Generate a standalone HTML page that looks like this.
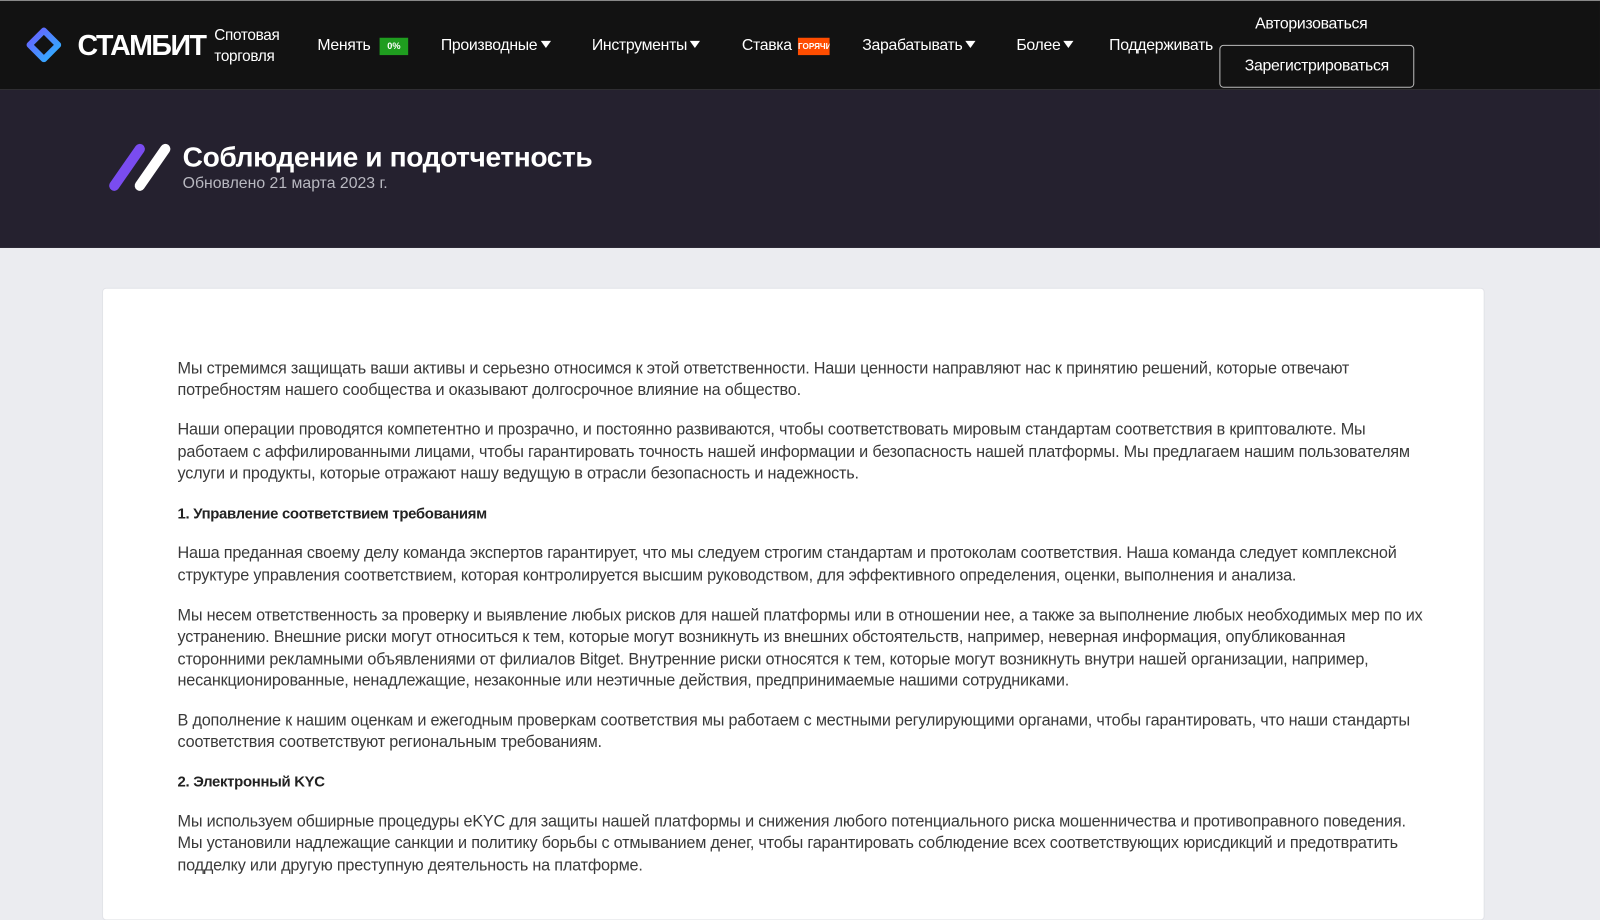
<!DOCTYPE html>
<html><head><meta charset="utf-8"><style>
*{margin:0;padding:0;box-sizing:border-box}
body{width:1600px;height:885px;overflow:hidden;background:#ebecf0;font-family:"Liberation Sans","Noto Sans CJK SC",sans-serif;position:relative}
.w{position:absolute;left:0;top:0;width:1568px;height:870px;transform:scale(1.0204);transform-origin:0 0}
.hdr{position:absolute;left:0;top:0;width:1568px;height:88px;background:#121212;border-top:1px solid #888;color:#fff}
.hdr .t{position:absolute;font-size:15.5px;white-space:nowrap;letter-spacing:-0.3px}
.tri{display:inline-block;width:0;height:0;border-left:5px solid transparent;border-right:5px solid transparent;border-top:7px solid #fff;margin-left:3px;vertical-align:2px}
.hero{position:absolute;left:0;top:88px;width:1568px;height:155px;background:#25212f}
.card{position:absolute;left:100px;top:282px;width:1355px;height:620px;background:#fff;border-radius:4px;border:1px solid #e2e3e8}
.l{position:absolute;left:174px;font-size:15.9px;color:#3a3a3a;white-space:nowrap;line-height:20px;letter-spacing:-0.2px}
.b{font-weight:bold;color:#222;font-size:14.6px;letter-spacing:-0.3px}
</style></head><body><div class="w">
<div class="hdr">
<svg style="position:absolute;left:26px;top:26px" width="34" height="34" viewBox="0 0 34 34"><defs><linearGradient id="g" x1="0" y1="0" x2="1" y2="1"><stop offset="0" stop-color="#6b5cff"/><stop offset="1" stop-color="#2bb6ff"/></linearGradient></defs><path d="M17 3 L31 17 L17 31 L3 17 Z" fill="none" stroke="url(#g)" stroke-width="6" stroke-linejoin="round"/></svg>
<div class="t" style="left:76px;top:28px;font-size:28px;font-weight:bold;letter-spacing:-1.5px">СТАМБИТ</div>
<div class="t" style="left:210px;top:25px;font-size:15px">Спотовая</div>
<div class="t" style="left:210px;top:46px;font-size:15px">торговля</div>
<div class="t" style="left:311px;top:35px">Менять</div>
<div style="position:absolute;left:372px;top:36px;width:28px;height:17px;background:#1f9d1f;color:#fff;font-size:9px;font-weight:bold;text-align:center;line-height:17px">0%</div>
<div class="t" style="left:432px;top:35px">Производные<span class="tri"></span></div>
<div class="t" style="left:580px;top:35px">Инструменты<span class="tri"></span></div>
<div class="t" style="left:727px;top:35px">Ставка</div>
<div style="position:absolute;left:782px;top:36px;width:31px;height:17px;background:#ff4d00;color:#fff;font-size:8px;font-weight:bold;line-height:17px;text-align:center;overflow:hidden">ГОРЯЧИЙ</div>
<div class="t" style="left:845px;top:35px">Зарабатывать<span class="tri"></span></div>
<div class="t" style="left:996px;top:35px">Более<span class="tri"></span></div>
<div class="t" style="left:1087px;top:35px">Поддерживать</div>
<div class="t" style="left:1230px;top:14px">Авторизоваться</div>
<div style="position:absolute;left:1195px;top:43px;width:191px;height:42px;border:1px solid #bbb;border-radius:4px;color:#fff;font-size:15.5px;line-height:40px;text-align:center;letter-spacing:-0.3px">Зарегистрироваться</div>
</div>
<div class="hero">
<svg style="position:absolute;left:104px;top:51px" width="66" height="50" viewBox="0 0 66 50"><line x1="8" y1="43" x2="33" y2="7" stroke="#7a4cf0" stroke-width="10" stroke-linecap="round"/><line x1="33" y1="43" x2="58" y2="7" stroke="#fff" stroke-width="10" stroke-linecap="round"/></svg>
<div style="position:absolute;left:179px;top:50px;color:#fff;font-size:27.6px;font-weight:bold;letter-spacing:-0.4px;white-space:nowrap">Соблюдение и подотчетность</div>
<div style="position:absolute;left:179px;top:83px;color:#b8b8c0;font-size:15.5px;white-space:nowrap">Обновлено 21 марта 2023 г.</div>
</div>
<div class="card"></div>
<div class="l" style="top:352px">Мы стремимся защищать ваши активы и серьезно относимся к этой ответственности. Наши ценности направляют нас к принятию решений, которые отвечают</div>
<div class="l" style="top:373px">потребностям нашего сообщества и оказывают долгосрочное влияние на общество.</div>
<div class="l" style="top:412px">Наши операции проводятся компетентно и прозрачно, и постоянно развиваются, чтобы соответствовать мировым стандартам соответствия в криптовалюте. Мы</div>
<div class="l" style="top:434px">работаем с аффилированными лицами, чтобы гарантировать точность нашей информации и безопасность нашей платформы. Мы предлагаем нашим пользователям</div>
<div class="l" style="top:455px">услуги и продукты, которые отражают нашу ведущую в отрасли безопасность и надежность.</div>
<div class="l b" style="top:494px">1. Управление соответствием требованиям</div>
<div class="l" style="top:533px">Наша преданная своему делу команда экспертов гарантирует, что мы следуем строгим стандартам и протоколам соответствия. Наша команда следует комплексной</div>
<div class="l" style="top:555px">структуре управления соответствием, которая контролируется высшим руководством, для эффективного определения, оценки, выполнения и анализа.</div>
<div class="l" style="top:594px">Мы несем ответственность за проверку и выявление любых рисков для нашей платформы или в отношении нее, а также за выполнение любых необходимых мер по их</div>
<div class="l" style="top:615px">устранению. Внешние риски могут относиться к тем, которые могут возникнуть из внешних обстоятельств, например, неверная информация, опубликованная</div>
<div class="l" style="top:637px">сторонними рекламными объявлениями от филиалов Bitget. Внутренние риски относятся к тем, которые могут возникнуть внутри нашей организации, например,</div>
<div class="l" style="top:658px">несанкционированные, ненадлежащие, незаконные или неэтичные действия, предпринимаемые нашими сотрудниками.</div>
<div class="l" style="top:697px">В дополнение к нашим оценкам и ежегодным проверкам соответствия мы работаем с местными регулирующими органами, чтобы гарантировать, что наши стандарты</div>
<div class="l" style="top:718px">соответствия соответствуют региональным требованиям.</div>
<div class="l b" style="top:757px">2. Электронный KYC</div>
<div class="l" style="top:796px">Мы используем обширные процедуры eKYC для защиты нашей платформы и снижения любого потенциального риска мошенничества и противоправного поведения.</div>
<div class="l" style="top:817px">Мы установили надлежащие санкции и политику борьбы с отмыванием денег, чтобы гарантировать соблюдение всех соответствующих юрисдикций и предотвратить</div>
<div class="l" style="top:839px">подделку или другую преступную деятельность на платформе.</div>
</div></body></html>
